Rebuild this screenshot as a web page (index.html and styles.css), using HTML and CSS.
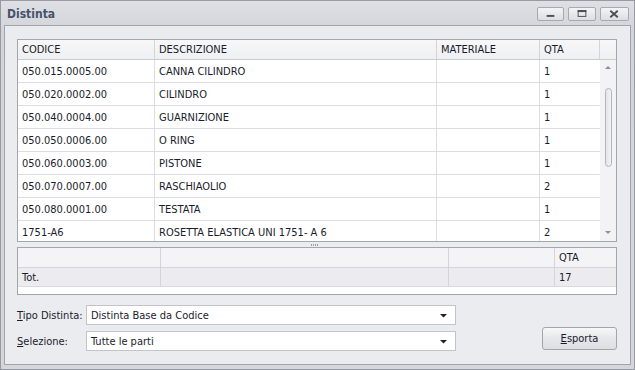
FILE: index.html
```html
<!DOCTYPE html>
<html lang="it">
<head>
  <meta charset="UTF-8" />
  <title>Distinta</title>
  <link rel="stylesheet" href="styles.css">
</head>
<body>

  <div class="finestra">
    <div class="barra-titolo">
      <span class="titolo">Distinta</span>
      <div class="pulsanti-finestra">
        <button class="pulsante-cap minimizza">
          <svg width="26" height="14" viewBox="0 0 26 14"><rect x="9" y="8" width="8" height="2" fill="#4b4e58"/></svg>
        </button>
        <button class="pulsante-cap massimizza">
          <svg width="27" height="14" viewBox="0 0 27 14"><rect x="9.5" y="3.5" width="8" height="6" fill="none" stroke="#4b4e58" stroke-width="1"/><rect x="9" y="3" width="9" height="2" fill="#4b4e58"/></svg>
        </button>
        <button class="pulsante-cap chiudi">
          <svg width="29" height="14" viewBox="0 0 29 14"><path d="M10 3.5 L18 10.5 M18 3.5 L10 10.5" stroke="#4b4e58" stroke-width="2"/></svg>
        </button>
      </div>
    </div>

    <div class="contenuto">
      <div class="griglia">
        <div class="griglia-testata">
          <div class="cella">CODICE</div>
          <div class="cella">DESCRIZIONE</div>
          <div class="cella">MATERIALE</div>
          <div class="cella">QTA</div>
          <div class="cella vuota"></div>
        </div>
        <div class="griglia-corpo">
          <div class="righe">
            <div class="riga"><div class="cella">050.015.0005.00</div><div class="cella">CANNA CILINDRO</div><div class="cella"></div><div class="cella">1</div></div>
            <div class="riga"><div class="cella">050.020.0002.00</div><div class="cella">CILINDRO</div><div class="cella"></div><div class="cella">1</div></div>
            <div class="riga"><div class="cella">050.040.0004.00</div><div class="cella">GUARNIZIONE</div><div class="cella"></div><div class="cella">1</div></div>
            <div class="riga"><div class="cella">050.050.0006.00</div><div class="cella">O RING</div><div class="cella"></div><div class="cella">1</div></div>
            <div class="riga"><div class="cella">050.060.0003.00</div><div class="cella">PISTONE</div><div class="cella"></div><div class="cella">1</div></div>
            <div class="riga"><div class="cella">050.070.0007.00</div><div class="cella">RASCHIAOLIO</div><div class="cella"></div><div class="cella">2</div></div>
            <div class="riga"><div class="cella">050.080.0001.00</div><div class="cella">TESTATA</div><div class="cella"></div><div class="cella">1</div></div>
            <div class="riga"><div class="cella">1751-A6</div><div class="cella">ROSETTA ELASTICA UNI 1751- A 6</div><div class="cella"></div><div class="cella">2</div></div>
          </div>
          <div class="scrollbar">
            <svg class="freccia" width="16" height="8" viewBox="0 0 16 8"><path d="M5 6 L11 6 L8 3 Z" fill="#8c8f97"/></svg>
            <div class="cursore"></div>
            <div class="spazio"></div>
            <svg class="freccia" width="16" height="8" viewBox="0 0 16 8"><path d="M5 2 L11 2 L8 5 Z" fill="#8c8f97"/></svg>
          </div>
        </div>
      </div>

      <div class="divisore"><span class="maniglia"></span></div>

      <div class="riepilogo">
        <div class="riepilogo-testata">
          <div class="cella"></div>
          <div class="cella"></div>
          <div class="cella"></div>
          <div class="cella">QTA</div>
        </div>
        <div class="riepilogo-totale">
          <div class="cella">Tot.</div>
          <div class="cella"></div>
          <div class="cella"></div>
          <div class="cella">17</div>
        </div>
        <div class="riepilogo-fondo"></div>
      </div>

      <div class="pannello">
        <div class="campi">
          <div class="campo">
            <label class="etichetta"><u>T</u>ipo Distinta:</label>
            <div class="combo">
              <span>Distinta Base da Codice</span>
              <svg width="9" height="5" viewBox="0 0 9 5"><path d="M1 1 L8 1 L4.5 4.5 Z" fill="#222"/></svg>
            </div>
          </div>
          <div class="campo">
            <label class="etichetta"><u>S</u>elezione:</label>
            <div class="combo">
              <span>Tutte le parti</span>
              <svg width="9" height="5" viewBox="0 0 9 5"><path d="M1 1 L8 1 L4.5 4.5 Z" fill="#222"/></svg>
            </div>
          </div>
        </div>
        <button class="esporta"><u>E</u>sporta</button>
      </div>
    </div>
  </div>

</body>
</html>
```

FILE: styles.css
```css
* {
  box-sizing: border-box;
}

body {
  margin: 0;
  width: 635px;
  height: 370px;
  font-family: "DejaVu Sans Condensed", "DejaVu Sans", sans-serif;
  font-stretch: condensed;
  font-size: 11px;
  color: #191c2c;
  background-color: #d4d6db;
  overflow: hidden;
}

.finestra {
  width: 635px;
  height: 370px;
  border: 1px solid #989aa3;
  background: linear-gradient(#dfe0e5, #d2d4d9 30px, #d4d6db);
  display: flex;
  flex-direction: column;
}

.barra-titolo {
  height: 24px;
  display: flex;
  align-items: center;
  justify-content: space-between;
  padding: 0 5px 0 6px;
}

.titolo {
  font-weight: bold;
  font-size: 12px;
  color: #47526b;
  margin-top: 1px;
}

.pulsanti-finestra {
  display: flex;
  gap: 4px;
  margin-top: 2px;
}

.pulsante-cap {
  height: 14px;
  padding: 0;
  border: 1px solid #a7a9b1;
  border-radius: 2px;
  background: linear-gradient(#f3f4f6, #dcdee3);
  display: flex;
  align-items: center;
  justify-content: center;
}

.pulsante-cap svg {
  display: block;
}

.minimizza { width: 27px; }
.massimizza { width: 28px; }
.chiudi { width: 29px; }

.contenuto {
  flex: 1;
  margin: 0 3px 4px 3px;
  border: 1px solid #a2a4ac;
  background-color: #ebecef;
  padding: 13px 13px 0 12px;
  display: flex;
  flex-direction: column;
}

/* griglia principale */
.griglia {
  width: 600px;
  border: 1px solid #a4a6ad;
  background-color: #fff;
}

.griglia-testata {
  display: grid;
  grid-template-columns: 137px 282px 103px 60px 16px;
  height: 20px;
  border-bottom: 1px solid #c9cbd0;
  background: linear-gradient(#f7f7f8, #eff0f2);
}

.griglia-testata .cella {
  border-right: 1px solid #d3d5da;
  padding: 3px 0 0 4px;
}

.griglia-testata .vuota {
  border-right: none;
}

.griglia-corpo {
  display: flex;
  height: 181px;
}

.righe {
  width: 582px;
  overflow: hidden;
}

.riga {
  display: grid;
  grid-template-columns: 137px 282px 103px 60px;
  height: 23px;
  border-bottom: 1px solid #dcdde2;
}

.riga .cella {
  border-right: 1px solid #dcdde2;
  padding: 5px 0 0 4px;
  white-space: nowrap;
}

.riga .cella:last-child {
  border-right: none;
}

.scrollbar {
  width: 16px;
  background-color: #f3f3f5;
  display: flex;
  flex-direction: column;
  align-items: center;
  padding: 3px 0 4px 0;
}

.freccia {
  display: block;
}

.cursore {
  margin-top: 17px;
  width: 7px;
  height: 79px;
  border: 1px solid #b3b5bc;
  border-radius: 4px;
  background: linear-gradient(90deg, #e4e5e9, #f2f2f4);
}

.spazio {
  flex: 1;
}

.divisore {
  height: 5px;
  display: flex;
  justify-content: center;
  align-items: center;
}

.maniglia {
  width: 7px;
  height: 2px;
  margin-right: 5px;
  background: repeating-linear-gradient(90deg, #9a9ca3 0 1px, transparent 1px 2px);
}

/* riepilogo totali */
.riepilogo {
  width: 600px;
  border: 1px solid #a4a6ad;
  background-color: #fff;
}

.riepilogo-testata,
.riepilogo-totale {
  display: grid;
  grid-template-columns: 143px 288px 106px 61px;
}

.riepilogo-testata {
  height: 20px;
  background: #f4f4f6;
  border-bottom: 1px solid #d3d5da;
}

.riepilogo-totale {
  height: 19px;
  background: #ececef;
  border-bottom: 1px solid #d9dadf;
}

.riepilogo-testata .cella,
.riepilogo-totale .cella {
  border-right: 1px solid #d3d5da;
  padding: 3px 0 0 4px;
}

.riepilogo-testata .cella:last-child,
.riepilogo-totale .cella:last-child {
  border-right: none;
}

.riepilogo-fondo {
  height: 7px;
}

/* pannello inferiore */
.pannello {
  display: flex;
  align-items: flex-end;
  justify-content: space-between;
  width: 600px;
  margin-top: 10px;
}

.campi {
  display: flex;
  flex-direction: column;
  gap: 6px;
}

.campo {
  display: flex;
  align-items: center;
}

.etichetta {
  width: 69px;
}

.combo {
  width: 370px;
  height: 20px;
  border: 1px solid #c2c4ca;
  background-color: #fff;
  display: flex;
  align-items: center;
  justify-content: space-between;
  padding: 0 7px 0 4px;
}

.combo svg {
  display: block;
}

.esporta {
  width: 75px;
  height: 23px;
  margin-bottom: 1px;
  font-family: inherit;
  font-stretch: condensed;
  font-size: 11px;
  color: #191c2c;
  border: 1px solid #a3a5ad;
  border-radius: 3px;
  background: linear-gradient(#f7f7f8, #e6e7ea 50%, #dddfe3);
  padding: 0;
}
```
